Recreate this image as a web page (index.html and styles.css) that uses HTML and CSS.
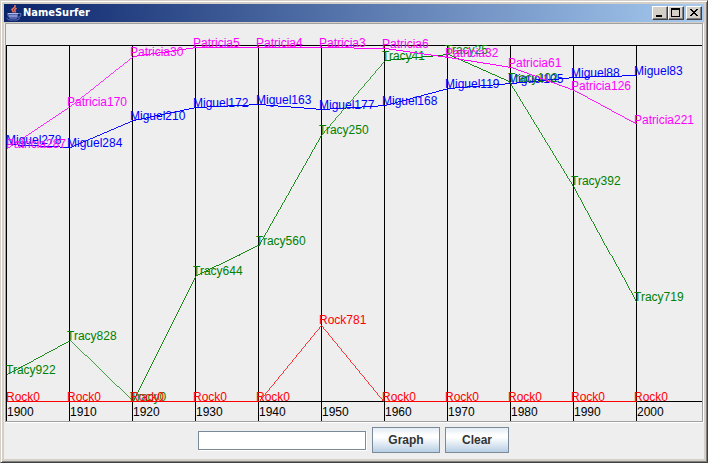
FILE: index.html
```html
<!DOCTYPE html>
<html lang="en">
<head>
<meta charset="utf-8">
<title>NameSurfer</title>
<link rel="stylesheet" href="styles.css">
</head>
<body>
<div class="window">
  <header class="titlebar">
    <svg class="logo" width="16" height="16" viewBox="0 0 16 16" fill="none">
      <path d="M9 0V2L6 4.5L7.5 7.5M10.5 3L8.5 5L9.5 7.5" stroke="#e8705c" stroke-width="1.6"/>
      <path d="M1 8H12V12L10.5 14H4L1.5 11Z" fill="#5263b0"/>
      <path d="M2 8.5H12M3 11H11" stroke="#b4bce3"/>
      <path d="M12 8.5H15L14.5 11.5L11.5 12.5M0.5 13L3 15H11L14 13.5" stroke="#6270bb"/>
    </svg>
    <h1 class="title">NameSurfer</h1>
    <div class="controls">
      <button class="control" aria-label="Minimize"><svg width="14" height="12" viewBox="0 0 14 12"><path d="M3 8H9V10H3Z"/></svg></button>
      <button class="control" aria-label="Maximize"><svg width="14" height="12" viewBox="0 0 14 12"><path fill-rule="evenodd" d="M2 1H11V10H2ZM3 3V9H10V3Z"/></svg></button>
      <button class="control close" aria-label="Close"><svg width="14" height="12" viewBox="0 0 14 12"><path d="M3 2H5V3H6V4H8V3H9V2H11V3H10V4H9V5H8V6H9V7H10V8H11V9H9V8H8V7H6V8H5V9H3V8H4V7H5V6H6V5H5V4H4V3H3Z"/></svg></button>
    </div>
  </header>
  <main class="content">
    <svg class="graph" id="graph" width="698" height="399" viewBox="6 24 696 397"></svg>
    <form class="toolbar">
      <input class="field" type="text" aria-label="Name">
      <button class="button graph-button" type="button">Graph</button>
      <button class="button clear-button" type="button">Clear</button>
    </form>
  </main>
</div>
<script src="graph.js"></script>
</body>
</html>
```
FILE: styles.css
```css
* { box-sizing: border-box; }
body { margin: 0; overflow: hidden; }
.window {
  width: 708px;
  height: 463px;
  padding: 3px;
  display: flex;
  flex-direction: column;
  background: #d4d0c8;
  border: 1px solid #d4d0c8;
  border-right-color: #404040;
  border-bottom-color: #404040;
  box-shadow: inset 1px 1px #fff, inset -1px -1px #808080;
}
.titlebar {
  flex: none;
  display: flex;
  align-items: center;
  height: 18px;
  padding: 0 2px;
  background: linear-gradient(90deg, #0a246a, #a6caf0);
}
.logo { flex: none; }
.title {
  flex: 1;
  margin: 0 0 0 1px;
  color: #fff;
  font: bold 11px/18px "DejaVu Sans Condensed", "DejaVu Sans", sans-serif;
}
.controls { display: flex; }
.control {
  width: 16px;
  height: 14px;
  padding: 0;
  display: flex;
  background: #d4d0c8;
  border: 1px solid;
  border-color: #fff #404040 #404040 #fff;
  box-shadow: inset -1px -1px #808080;
}
.control svg { shape-rendering: crispEdges; }
.close { margin-left: 2px; }
.content {
  flex: 1;
  display: flex;
  flex-direction: column;
  margin-top: 1px;
  border-left: 1px solid #f0eeea;
  background: #eee;
}
.graph {
  flex: none;
  width: 698px;
  height: 399px;
  border: 1px solid #a0a0a0;
  box-shadow: 1px 1px #fff;
}
.graph text { font: 12px "Liberation Sans", Arial, sans-serif; }
.graph line { shape-rendering: crispEdges; }
.grid { stroke: #000; }
.year { fill: #000; }
.tracy { stroke: #008000; }
.tracy-label { fill: #008000; }
.patricia { stroke: #f0f; }
.patricia-label { fill: #f0f; }
.miguel { stroke: #00f; }
.miguel-label { fill: #00f; }
.rock { stroke: #f00; }
.rock-label { fill: #f00; }
.toolbar {
  display: flex;
  align-items: center;
  height: 36px;
  padding-left: 193px;
}
.field {
  width: 168px;
  height: 19px;
  padding: 0 2px;
  border: 1px solid #7a8a99;
  background: #fff;
  box-shadow: 1px 1px #fff;
  font: 12px "Liberation Sans", sans-serif;
}
.button {
  height: 26px;
  padding: 0;
  border: 1px solid #7a8a99;
  color: #333;
  background: linear-gradient(#e4ecf5, #fff 30%, #fff 40%, #b8cfe5);
  font: bold 12px "Liberation Sans", Arial, sans-serif;
}
.graph-button { width: 68px; margin-left: 6px; }
.clear-button { width: 64px; margin-left: 5px; }
```
FILE: graph.js
```js
const svg = document.getElementById('graph');
const LEFT = 6, STEP = 63, TOP = 45, BOTTOM = 401, RIGHT = 702;

function add(tag, attrs, text) {
  const node = document.createElementNS('http://www.w3.org/2000/svg', tag);
  for (const key in attrs) node.setAttribute(key, attrs[key]);
  if (text) node.textContent = text;
  svg.appendChild(node);
}

// Sloped strokes are thinned so that each one stays a single pixel wide.
function line(x1, y1, x2, y2, kind) {
  const dx = Math.abs(x2 - x1), dy = Math.abs(y2 - y1);
  add('line', { x1, y1, x2, y2, class: kind, 'stroke-width': Math.max(dx, dy) / Math.hypot(dx, dy) });
}

line(LEFT, TOP + 0.5, RIGHT, TOP + 0.5, 'grid');
line(LEFT, BOTTOM + 0.5, RIGHT, BOTTOM + 0.5, 'grid');
for (let i = 0; i < 11; i++) {
  const x = LEFT + i * STEP;
  line(x + 0.5, TOP, x + 0.5, 421, 'grid');
  add('text', { x: x + 1, y: 416, class: 'year' }, String(1900 + i * 10));
}

const entries = [
  ['Miguel', [278, 284, 210, 172, 163, 177, 168, 119, 105, 88, 83]],
  ['Tracy', [922, 828, 0, 644, 560, 250, 41, 25, 102, 392, 719]],
  ['Patricia', [287, 170, 30, 5, 4, 3, 6, 32, 61, 126, 221]],
  ['Rock', [0, 0, 0, 0, 0, 781, 0, 0, 0, 0, 0]]
];

for (const [name, ranks] of entries) {
  const kind = name.toLowerCase();
  const y = rank => rank ? Math.ceil(TOP + rank * (BOTTOM - TOP) / 1000) : BOTTOM;
  ranks.forEach((rank, i) => {
    const x = LEFT + i * STEP;
    if (i < ranks.length - 1) {
      line(x + 0.5, y(rank) + 0.5, x + STEP + 0.5, y(ranks[i + 1]) + 0.5, kind);
    }
    add('text', { x: x - (i ? 2 : 0), y: y(rank), class: kind + '-label' }, name + rank);
  });
}
```
